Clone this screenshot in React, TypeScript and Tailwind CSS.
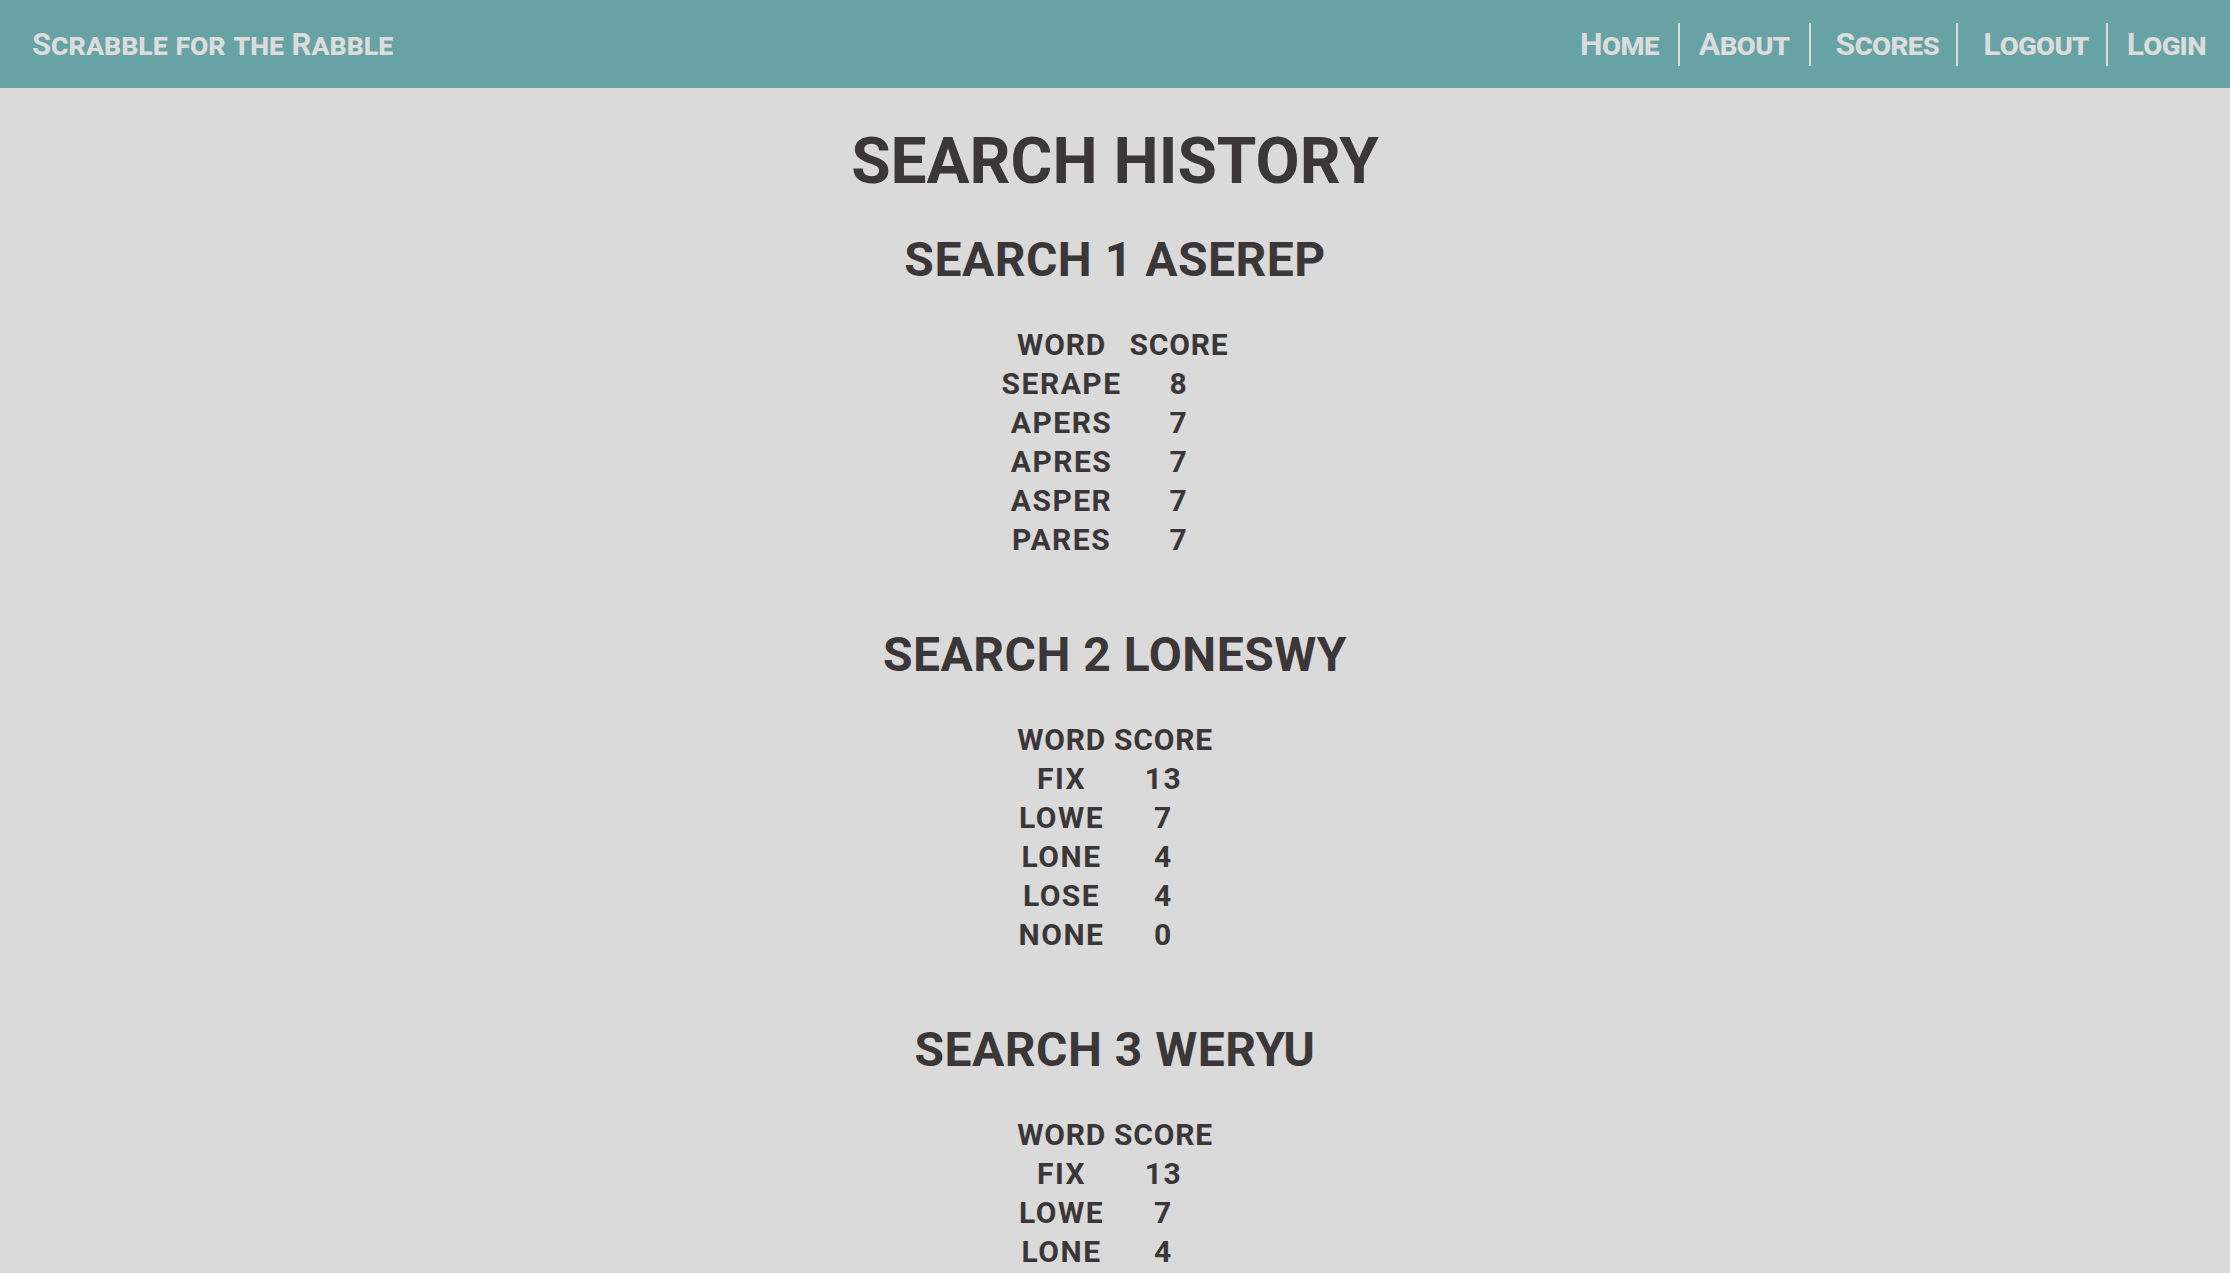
import React from 'react';

type Row = { word: string; score: number };
type Search = { id: number; letters: string; rows: Row[] };

const searches: Search[] = [
    {
        id: 1,
        letters: 'ASEREP',
        rows: [
            { word: 'SERAPE', score: 8 },
            { word: 'APERS', score: 7 },
            { word: 'APRES', score: 7 },
            { word: 'ASPER', score: 7 },
            { word: 'PARES', score: 7 },
        ],
    },
    {
        id: 2,
        letters: 'LONESWY',
        rows: [
            { word: 'FIX', score: 13 },
            { word: 'LOWE', score: 7 },
            { word: 'LONE', score: 4 },
            { word: 'LOSE', score: 4 },
            { word: 'NONE', score: 0 },
        ],
    },
    {
        id: 3,
        letters: 'WERYU',
        rows: [
            { word: 'FIX', score: 13 },
            { word: 'LOWE', score: 7 },
            { word: 'LONE', score: 4 },
            { word: 'LOSE', score: 4 },
            { word: 'NONE', score: 0 },
        ],
    },
];

const links = [
    { label: 'Home', cls: 'pl-0 pr-[19px]' },
    { label: 'About', cls: 'px-[19px] border-l-2 border-[#dcdcdc]' },
    { label: 'Scores', cls: 'pl-[25px] pr-[17px] border-l-2 border-[#dcdcdc]' },
    { label: 'Logout', cls: 'pl-[25px] pr-[17px] border-l-2 border-[#dcdcdc]' },
    { label: 'Login', cls: 'pl-[19px] pr-0 border-l-2 border-[#dcdcdc]' },
];

const App: React.FC = () => {
    return (
        <div className="min-h-screen bg-[#dadada] text-[#3b3637] font-['Roboto','Liberation_Sans',sans-serif]">
            {/* Top bar */}
            <header className="h-[88px] bg-[#67a3a5] flex items-center justify-between pl-[32px] pr-[24px] text-[#dcdcdc] font-bold">
                <a className="text-[31px] leading-none [font-variant:small-caps]">Scrabble for the Rabble</a>
                <nav className="flex items-center">
                    {links.map((l) => (
                        <a key={l.label} className={`h-[43px] flex items-center text-[32px] leading-none tracking-[-0.6px] [font-variant:small-caps] ${l.cls}`}>
                            {l.label}
                        </a>
                    ))}
                </nav>
            </header>

            <main className="flex flex-col items-center pt-[42px]">
                <h1 className="text-[64px] leading-none font-bold mb-[42px]">SEARCH HISTORY</h1>

                <div className="flex flex-col items-center gap-[72px]">
                    {searches.map((s) => (
                        <section key={s.id} className="flex flex-col items-center gap-[41px]">
                            <h2 className="text-[48px] leading-none font-bold tracking-[0.5px]">
                                SEARCH {s.id} {s.letters}
                            </h2>
                            <table className="text-[30px] leading-[39px]">
                                <thead>
                                    <tr>
                                        <th className="px-[4px] font-bold tracking-[0.8px]">WORD</th>
                                        <th className="px-[4px] font-bold tracking-[0.8px]">SCORE</th>
                                    </tr>
                                </thead>
                                <tbody>
                                    {s.rows.map((r) => (
                                        <tr key={r.word}>
                                            <td className="px-[4px] text-center font-bold tracking-[1.5px]">{r.word}</td>
                                            <td className="px-[4px] text-center font-bold tracking-[1.5px]">{r.score}</td>
                                        </tr>
                                    ))}
                                </tbody>
                            </table>
                        </section>
                    ))}
                </div>
            </main>
        </div>
    );
};

export default App;
